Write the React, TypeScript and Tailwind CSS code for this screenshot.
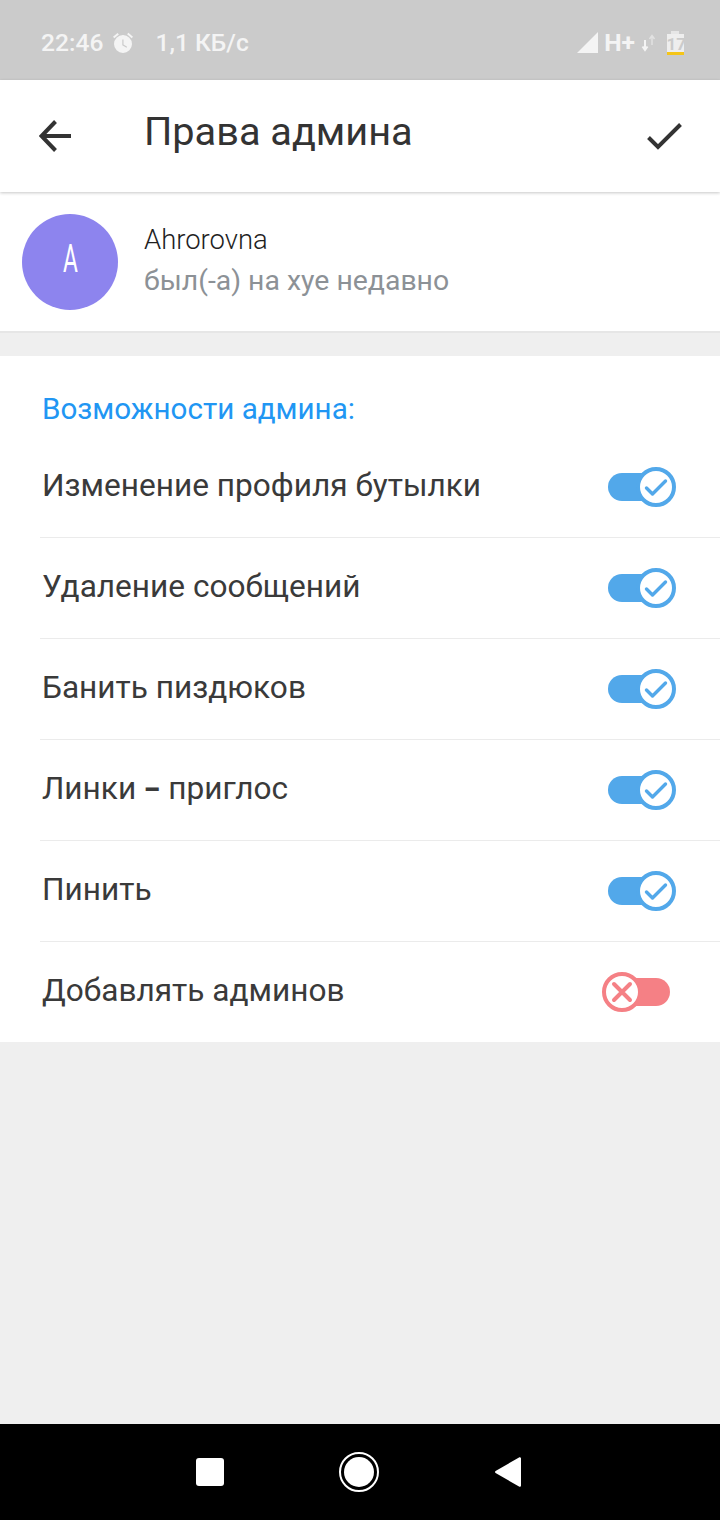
import type { ReactNode } from 'react';

const dash = <span className="inline-block mx-[2px] font-bold scale-x-150">-</span>;

const rights: { label: ReactNode; on: boolean }[] = [
  { label: 'Изменение профиля бутылки', on: true },
  { label: 'Удаление сообщений', on: true },
  { label: 'Банить пиздюков', on: true },
  { label: <>Линки {dash} приглос</>, on: true },
  { label: 'Пинить', on: true },
  { label: 'Добавлять админов', on: false },
];

function Toggle({ on }: { on: boolean }) {
  if (on) {
    return (
      <div className="flex items-center w-[68px] h-[40px]">
        <div className="w-[48px] h-[28px] rounded-full bg-[#52a8ea]" />
        <div className="-ml-[20px] w-[40px] h-[40px] rounded-full border-[4px] border-[#52a8ea] bg-white flex items-center justify-center">
          <svg width="28" height="28" viewBox="0 0 28 28" fill="none">
            <path d="M4.5 15l6 6L23.5 8" stroke="#52a8ea" strokeWidth="3.4" strokeLinecap="round" strokeLinejoin="round" />
          </svg>
        </div>
      </div>
    );
  }
  return (
    <div className="flex items-center w-[68px] h-[40px] -mt-[2px] -translate-x-[6px]">
      <div className="relative z-10 w-[40px] h-[40px] rounded-full border-[4px] border-[#f58085] bg-white flex items-center justify-center">
        <svg width="24" height="24" viewBox="0 0 24 24" fill="none">
          <path d="M4 4l16 16M20 4L4 20" stroke="#f58085" strokeWidth="4" strokeLinecap="round" />
        </svg>
      </div>
      <div className="-ml-[12px] w-[40px] h-[28px] rounded-r-full bg-[#f58085]" />
    </div>
  );
}

export default function App() {
  return (
    <div className="w-[720px] h-[1520px] flex flex-col bg-[#efefef] font-['Roboto',sans-serif] overflow-hidden">
      {/* status bar */}
      <div className="h-[80px] bg-[#cbcbcb] flex items-center justify-between pl-[41px] pr-[36px] text-[#f4f4f4] font-medium shrink-0 pt-[6px]">
        <div className="flex items-center text-[24.6px]">
          <span>22:46</span>
          <svg className="ml-[8px]" width="24" height="24" viewBox="0 0 24 24" fill="#f4f4f4">
            <path
              fillRule="evenodd"
              d="M22 5.7l-4.6-3.9-1.3 1.5 4.6 3.9L22 5.7zM7.9 3.4L6.6 1.9 2 5.7l1.3 1.5 4.6-3.8zM12 4a9 9 0 1 0 0 18 9 9 0 0 0 0-18zm-.7 4.6h1.2v5l3.6 2.2-.6 1-4.2-2.6V8.6z"
            />
          </svg>
          <span className="ml-[20px]">1,1 КБ/с</span>
        </div>
        <div className="flex items-center">
          <svg width="21" height="21" viewBox="0 0 21 21" fill="#f4f4f4">
            <path d="M21 0v21H0z" />
          </svg>
          <span className="ml-[6px] text-[24.6px] font-bold">H+</span>
          <svg className="ml-[5px]" width="16" height="18" viewBox="0 0 16 18" fill="none">
            <path d="M5 6v9M2.5 12.5L5 16l2.5-3.5" stroke="#f4f4f4" strokeWidth="2" />
            <path d="M12 11V2M9.5 5L12 1.5 14.5 5" stroke="#e2e2e2" strokeWidth="1.5" />
          </svg>
          <div className="ml-[10px] w-[18px] h-[24px] relative flex flex-col items-center">
            <div className="w-[8px] h-[3px] bg-[#e6e6e6]" />
            <div className="w-[17px] h-[18px] bg-[#eeeeee] text-[#cbcbcb] text-[17px] leading-[20px] font-bold text-center">17</div>
            <div className="w-[17px] h-[3px] bg-[#f5c518]" />
          </div>
        </div>
      </div>

      {/* header */}
      <div className="h-[112px] bg-white flex items-center justify-between pl-[39px] pr-[38px] shadow-[0_1px_3px_rgba(0,0,0,0.22)] shrink-0 relative z-10">
        <div className="flex items-center">
          <svg width="32" height="32" viewBox="0 0 32 32" fill="none">
            <path d="M32 16H3M16.5 1.5L2.5 16l14 14.5" stroke="#333333" strokeWidth="4" />
          </svg>
          <span className="ml-[73px] text-[39.7px] leading-none text-[#333333] -mt-[8px]">Права админа</span>
        </div>
        <svg width="35" height="27" viewBox="0 0 35 27" fill="none">
          <path d="M1.5 14.5L11 24 33.5 1.5" stroke="#333333" strokeWidth="4" />
        </svg>
      </div>

      {/* contact */}
      <div className="h-[141px] bg-white flex items-center pl-[22px] border-b-2 border-[#e6e6e6] shrink-0">
        <div className="w-[96px] h-[96px] rounded-full bg-[#8d84ee] flex items-center justify-center text-white text-[38px] leading-none">
          <span className="inline-block scale-x-[0.6] -mt-[6px]">A</span>
        </div>
        <div className="ml-[26px] flex flex-col -mt-[3px]">
          <span className="text-[28px] leading-[36px] font-light text-[#1f1f1f] inline-block origin-left scale-x-[0.98]">Ahrorovna</span>
          <span className="mt-[6px] text-[28.4px] leading-[34px] text-[#8c9196]">был(-а) на хуе недавно</span>
        </div>
      </div>

      <div className="h-[23px] shrink-0" />

      {/* rights */}
      <div className="bg-white shrink-0 pt-[35px] h-[686px]">
        <div className="pl-[42px] text-[29.6px] leading-[36px] text-[#2196f3]">Возможности админа:</div>
        <div className="pl-[40px]">
          {rights.map((r, i) => (
            <div
              key={i}
              className={`flex items-center justify-between pr-[44px] pl-[2px] ${i === 0 ? 'h-[111px] pt-[10px]' : 'h-[101px]'} ${i < rights.length - 1 ? 'border-b-[1.5px] border-[#ebebeb]' : ''}`}
            >
              <span className="text-[31.6px] leading-[40px] text-[#3a3a3a] -mt-[3px]">{r.label}</span>
              <Toggle on={r.on} />
            </div>
          ))}
        </div>
      </div>

      <div className="flex-1" />

      {/* nav bar */}
      <div className="h-[96px] bg-black flex items-center pl-[196px] shrink-0">
        <div className="w-[28px] h-[28px] rounded-[3px] bg-white" />
        <div className="ml-[115px] w-[40px] h-[40px] rounded-full border-2 border-white flex items-center justify-center">
          <div className="w-[30px] h-[30px] rounded-full bg-white" />
        </div>
        <svg className="ml-[116px]" width="26" height="30" viewBox="0 0 26 30" fill="white">
          <path d="M24 .4c1-.6 2 0 2 1.2v26.8c0 1.2-1 1.8-2 1.2L1 16.2c-1.3-.6-1.3-1.8 0-2.4z" />
        </svg>
      </div>
    </div>
  );
}
